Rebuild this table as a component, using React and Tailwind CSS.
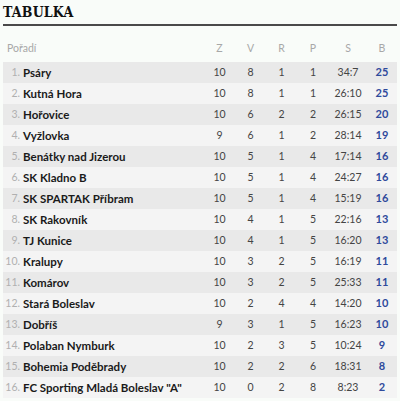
import React from 'react';

const rows = [
    ['Psáry', 10, 8, 1, 1, '34:7', 25],
    ['Kutná Hora', 10, 8, 1, 1, '26:10', 25],
    ['Hořovice', 10, 6, 2, 2, '26:15', 20],
    ['Vyžlovka', 9, 6, 1, 2, '28:14', 19],
    ['Benátky nad Jizerou', 10, 5, 1, 4, '17:14', 16],
    ['SK Kladno B', 10, 5, 1, 4, '24:27', 16],
    ['SK SPARTAK Příbram', 10, 5, 1, 4, '15:19', 16],
    ['SK Rakovník', 10, 4, 1, 5, '22:16', 13],
    ['TJ Kunice', 10, 4, 1, 5, '16:20', 13],
    ['Kralupy', 10, 3, 2, 5, '16:19', 11],
    ['Komárov', 10, 3, 2, 5, '25:33', 11],
    ['Stará Boleslav', 10, 2, 4, 4, '14:20', 10],
    ['Dobříš', 9, 3, 1, 5, '16:23', 10],
    ['Polaban Nymburk', 10, 2, 3, 5, '10:24', 9],
    ['Bohemia Poděbrady', 10, 2, 2, 6, '18:31', 8],
    ['FC Sporting Mladá Boleslav "A"', 10, 0, 2, 8, '8:23', 2],
];

const App = () => {
    return (
        <div className="w-[400px] h-[401px] bg-[#f9fcf9] px-[3px] pt-[5px] font-['Lato',sans-serif]">
            <h1 className="h-[19px] text-[14px] leading-[14px] font-bold text-[#111] font-['DejaVu_Serif_Condensed','DejaVu_Serif',serif] tracking-[0.2px]">
                TABULKA
            </h1>
            <div className="h-[2px] bg-[#4a4a4a] w-[394px]"></div>
            <table className="w-[394px] table-fixed border-collapse mt-[9px] text-[10.5px]">
                <colgroup>
                    <col className="w-[18px]" />
                    <col />
                    <col className="w-[31px]" />
                    <col className="w-[31px]" />
                    <col className="w-[31px]" />
                    <col className="w-[32px]" />
                    <col className="w-[38px]" />
                    <col className="w-[30px]" />
                </colgroup>
                <thead>
                    <tr className="h-[27px] text-[#a8a8a8]">
                        <th colSpan={2} className="text-left font-normal pl-[4px]">Pořadí</th>
                        <th className="font-normal">Z</th>
                        <th className="font-normal">V</th>
                        <th className="font-normal">R</th>
                        <th className="font-normal">P</th>
                        <th className="font-normal">S</th>
                        <th className="font-normal">B</th>
                    </tr>
                </thead>
                <tbody>
                    {rows.map((r, i) => (
                        <tr key={i} className={`h-[21px] ${i % 2 === 0 ? 'bg-[#e9e9e9]' : 'bg-[#f4f4f4]'}`}>
                            <td className="text-right text-[#b0b0b0] pr-[1px]">{i + 1}.</td>
                            <td className="pl-[2px] text-[11.5px] font-bold text-[#1a1a1a] whitespace-nowrap">{r[0]}</td>
                            <td className="text-center text-[#444]">{r[1]}</td>
                            <td className="text-center text-[#444]">{r[2]}</td>
                            <td className="text-center text-[#444]">{r[3]}</td>
                            <td className="text-center text-[#444]">{r[4]}</td>
                            <td className="text-center text-[#444]">{r[5]}</td>
                            <td className="text-center text-[11px] font-bold text-[#2f4a9c]">{r[6]}</td>
                        </tr>
                    ))}
                </tbody>
            </table>
        </div>
    );
};

export default App;
